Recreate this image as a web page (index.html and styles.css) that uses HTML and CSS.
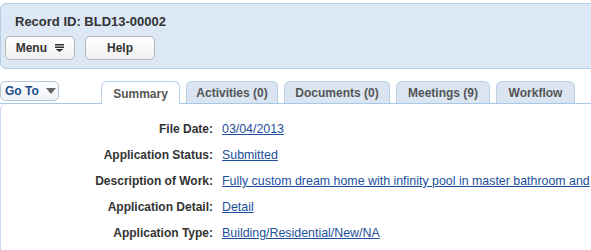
FILE: index.html
```html
<!DOCTYPE html>
<html>
<head>
    <title>Record BLD13-00002</title>
    <link rel="stylesheet" href="styles.css">
</head>
<body>
    <div class="record-header">
        <div class="record-id">Record ID: BLD13-00002</div>
        <div class="header-buttons">
            <button class="hdr-btn">Menu
                <svg class="menu-icon" width="9" height="8" viewBox="0 0 9 8">
                    <rect x="0" y="0" width="9" height="1.5" fill="#333"/>
                    <rect x="0" y="2.5" width="9" height="1.5" fill="#333"/>
                    <polygon points="0.5,5 8.5,5 4.5,8" fill="#333"/>
                </svg>
            </button>
            <button class="hdr-btn">Help</button>
        </div>
    </div>

    <div class="tab-bar">
        <button class="goto-btn">Go To <span class="caret"></span></button>
        <ul class="tabs">
            <li class="tab tab-summary active">Summary</li>
            <li class="tab tab-activities">Activities (0)</li>
            <li class="tab tab-documents">Documents (0)</li>
            <li class="tab tab-meetings">Meetings (9)</li>
            <li class="tab tab-workflow">Workflow</li>
        </ul>
    </div>

    <div class="tab-content">
        <div class="field-row">
            <span class="field-label">File Date:</span>
            <a href="#" class="field-value">03/04/2013</a>
        </div>
        <div class="field-row">
            <span class="field-label">Application Status:</span>
            <a href="#" class="field-value">Submitted</a>
        </div>
        <div class="field-row">
            <span class="field-label">Description of Work:</span>
            <a href="#" class="field-value">Fully custom dream home with infinity pool in master bathroom and</a>
        </div>
        <div class="field-row">
            <span class="field-label">Application Detail:</span>
            <a href="#" class="field-value">Detail</a>
        </div>
        <div class="field-row">
            <span class="field-label">Application Type:</span>
            <a href="#" class="field-value">Building/Residential/New/NA</a>
        </div>
    </div>
</body>
</html>
```

FILE: styles.css
```css
body {
    margin: 0;
    padding-top: 3px;
    font-family: "Liberation Sans", Arial, sans-serif;
    font-size: 12px;
    color: #333;
    overflow: hidden;
    width: 591px;
    height: 250px;
}

.record-header {
    margin-right: -20px;
    height: 66px;
    background: #dce8f6;
    border: 1px solid #b8cfe8;
    border-radius: 6px 0 0 6px;
    box-sizing: border-box;
    padding: 10px 0 0 14px;
}

.record-id {
    font-size: 13px;
    font-weight: bold;
    color: #333;
    line-height: 16px;
}

.header-buttons {
    display: flex;
    gap: 10px;
    margin: 6px 0 0 -10px;
}

.hdr-btn {
    width: 70px;
    height: 24px;
    padding: 0;
    font-family: inherit;
    font-size: 12px;
    font-weight: bold;
    color: #333;
    background: linear-gradient(#ffffff, #f0f0f0);
    border: 1px solid #b9b9b9;
    border-radius: 5px;
}

.menu-icon {
    margin-left: 5px;
    vertical-align: 0;
}

.tab-bar {
    display: flex;
    align-items: flex-end;
    margin-top: 11px;
    height: 23px;
    border-bottom: 1px solid #a9c7e6;
}

.goto-btn {
    align-self: flex-start;
    margin-top: 1px;
    height: 20px;
    width: 59px;
    flex-shrink: 0;
    padding: 0 0 0 4px;
    text-align: left;
    font-family: inherit;
    font-size: 12px;
    font-weight: bold;
    color: #1c4b8c;
    background: linear-gradient(#ffffff, #eef2f7);
    border: 1px solid #b9c6d6;
    border-radius: 5px;
}

.caret {
    display: inline-block;
    margin-left: 4px;
    vertical-align: 1px;
    border-left: 5px solid transparent;
    border-right: 5px solid transparent;
    border-top: 6px solid #666;
}

.tabs {
    display: flex;
    gap: 6px;
    list-style: none;
    margin: 0 0 -1px 42px;
    padding: 0;
}

.tab {
    flex-shrink: 0;
    box-sizing: border-box;
    white-space: nowrap;
    text-align: center;
    height: 22px;
    line-height: 23px;
    padding: 0;
    font-size: 12px;
    font-weight: bold;
    color: #555;
    background: #dae5f1;
    border: 1px solid #b8cfe8;
    border-bottom: none;
    border-radius: 6px 6px 0 0;
}

.tab.active {
    background: #fff;
    height: 23px;
    line-height: 25px;
}

.tab-summary { width: 79px; }
.tab-activities { width: 92px; }
.tab-documents { width: 106px; }
.tab-meetings { width: 94px; }
.tab-workflow { width: 79px; }

.tab-content {
    border-left: 1px solid #c9daec;
    border-top-left-radius: 6px;
    padding-top: 18px;
}

.field-row {
    display: flex;
    gap: 9px;
    height: 26px;
    white-space: nowrap;
}

.field-label {
    width: 212px;
    flex-shrink: 0;
    text-align: right;
    font-weight: bold;
    color: #333;
}

.field-value {
    font-size: 12.4px;
    color: #1c4f9c;
    text-decoration: underline;
}
```
